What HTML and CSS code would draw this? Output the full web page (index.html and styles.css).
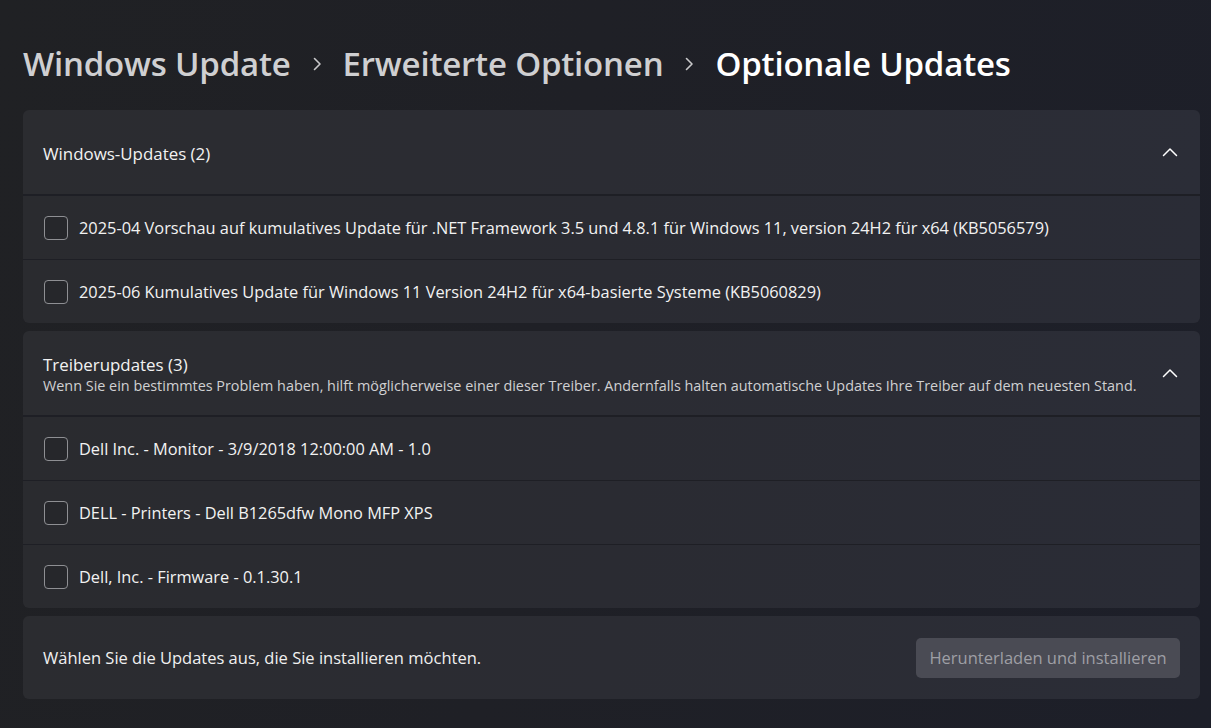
FILE: index.html
```html
<!DOCTYPE html>
<html lang="de">
<head>
<meta charset="utf-8">
<title>Optionale Updates</title>
<link rel="stylesheet" href="styles.css">
</head>
<body>
<main class="page">
  <h1 class="breadcrumb">
    <span class="crumb">Windows Update</span>
    <svg class="sep" viewBox="0 0 10 14" width="10" height="14"><path d="M2.5 1.5 L8 7 L2.5 12.5" fill="none" stroke="currentColor" stroke-width="1.6" stroke-linecap="round" stroke-linejoin="round"/></svg>
    <span class="crumb">Erweiterte Optionen</span>
    <svg class="sep" viewBox="0 0 10 14" width="10" height="14"><path d="M2.5 1.5 L8 7 L2.5 12.5" fill="none" stroke="currentColor" stroke-width="1.6" stroke-linecap="round" stroke-linejoin="round"/></svg>
    <span class="crumb current">Optionale Updates</span>
  </h1>

  <section class="group">
    <div class="group-head">
      <div class="head-text">
        <div class="head-title">Windows-Updates (2)</div>
      </div>
      <svg class="chev" viewBox="0 0 16 10" width="16" height="10"><path d="M1.5 8.5 L8 2 L14.5 8.5" fill="none" stroke="currentColor" stroke-width="1.5" stroke-linecap="round" stroke-linejoin="round"/></svg>
    </div>
    <div class="rows">
      <label class="row"><span class="box"></span><span class="row-text">2025-04 Vorschau auf kumulatives Update für .NET Framework 3.5 und 4.8.1 für Windows 11, version 24H2 für x64 (KB5056579)</span></label>
      <label class="row"><span class="box"></span><span class="row-text">2025-06 Kumulatives Update für Windows 11 Version 24H2 für x64-basierte Systeme (KB5060829)</span></label>
    </div>
  </section>

  <section class="group">
    <div class="group-head">
      <div class="head-text">
        <div class="head-title">Treiberupdates (3)</div>
        <div class="head-desc">Wenn Sie ein bestimmtes Problem haben, hilft möglicherweise einer dieser Treiber. Andernfalls halten automatische Updates Ihre Treiber auf dem neuesten Stand.</div>
      </div>
      <svg class="chev" viewBox="0 0 16 10" width="16" height="10"><path d="M1.5 8.5 L8 2 L14.5 8.5" fill="none" stroke="currentColor" stroke-width="1.5" stroke-linecap="round" stroke-linejoin="round"/></svg>
    </div>
    <div class="rows">
      <label class="row"><span class="box"></span><span class="row-text">Dell Inc. - Monitor - 3/9/2018 12:00:00 AM - 1.0</span></label>
      <label class="row"><span class="box"></span><span class="row-text">DELL - Printers - Dell B1265dfw Mono MFP XPS</span></label>
      <label class="row"><span class="box"></span><span class="row-text">Dell, Inc. - Firmware - 0.1.30.1</span></label>
    </div>
  </section>

  <section class="footer-card">
    <span class="footer-text">Wählen Sie die Updates aus, die Sie installieren möchten.</span>
    <button class="btn" type="button" disabled>Herunterladen und installieren</button>
  </section>
</main>
</body>
</html>
```

FILE: styles.css
```css
html, body {
  margin: 0;
  height: 100%;
}
body {
  background: linear-gradient(100deg, #202124 0%, #1f2026 45%, #1d1f29 100%);
  font-family: "Open Sans", "Noto Sans", sans-serif;
  color: #ffffff;
  overflow: hidden;
}
.page {
  padding: 0 11px 0 23px;
}
.breadcrumb {
  margin: 0 0 22px 0;
  padding-top: 40px;
  height: 48px;
  display: flex;
  align-items: center;
  font-size: 33px;
  font-weight: 600;
  line-height: 48px;
  letter-spacing: -0.2px;
  color: #cfcfd1;
}
.crumb {
  white-space: nowrap;
}
.crumb.current {
  color: #ffffff;
}
.sep {
  color: #c8c8ca;
  margin: 0 21px 0 21px;
  flex: none;
}
.group {
  margin-bottom: 8px;
  border-radius: 6px;
  overflow: hidden;
  background: #1e1f25;
  display: flex;
  flex-direction: column;
  gap: 2px;
}
.group-head {
  height: 84px;
  background: linear-gradient(100deg, #2b2c30 0%, #2b2c33 50%, #2b2d37 100%);
  display: flex;
  align-items: center;
  padding: 0 22px 0 20px;
}
.head-text {
  flex: 1;
  padding-top: 3px;
}
.head-title {
  font-size: 16.9px;
  line-height: 21px;
  color: #f2f2f2;
}
.head-desc {
  font-size: 14.4px;
  line-height: 21px;
  color: #d0d0d2;
}
.chev {
  color: #ffffff;
  flex: none;
}
.rows {
  display: flex;
  flex-direction: column;
  gap: 1px;
}
.row {
  height: 63px;
  background: linear-gradient(100deg, #2a2b2f 0%, #2a2b32 50%, #2a2c36 100%);
  display: flex;
  align-items: center;
  padding: 0 20px 0 21px;
}
.box {
  width: 22px;
  height: 22px;
  border: 1.5px solid #8e8f93;
  border-radius: 4px;
  background: #26272b;
  flex: none;
  margin-right: 11px;
}
.row-text {
  font-size: 16.35px;
  color: #f2f2f2;
  white-space: nowrap;
}
.footer-card {
  height: 83px;
  border-radius: 6px;
  background: linear-gradient(100deg, #2b2c30 0%, #2b2c33 50%, #2b2d37 100%);
  display: flex;
  align-items: center;
  justify-content: space-between;
  padding: 0 20px 0 20px;
}
.footer-text {
  font-size: 16.5px;
  color: #f0f0f0;
}
.btn {
  width: 264px;
  height: 40px;
  border: none;
  border-radius: 5px;
  background: #4a4b54;
  color: #9e9fa5;
  font-family: "Open Sans", "Noto Sans", sans-serif;
  font-size: 16.5px;
  padding: 0;
}
```
